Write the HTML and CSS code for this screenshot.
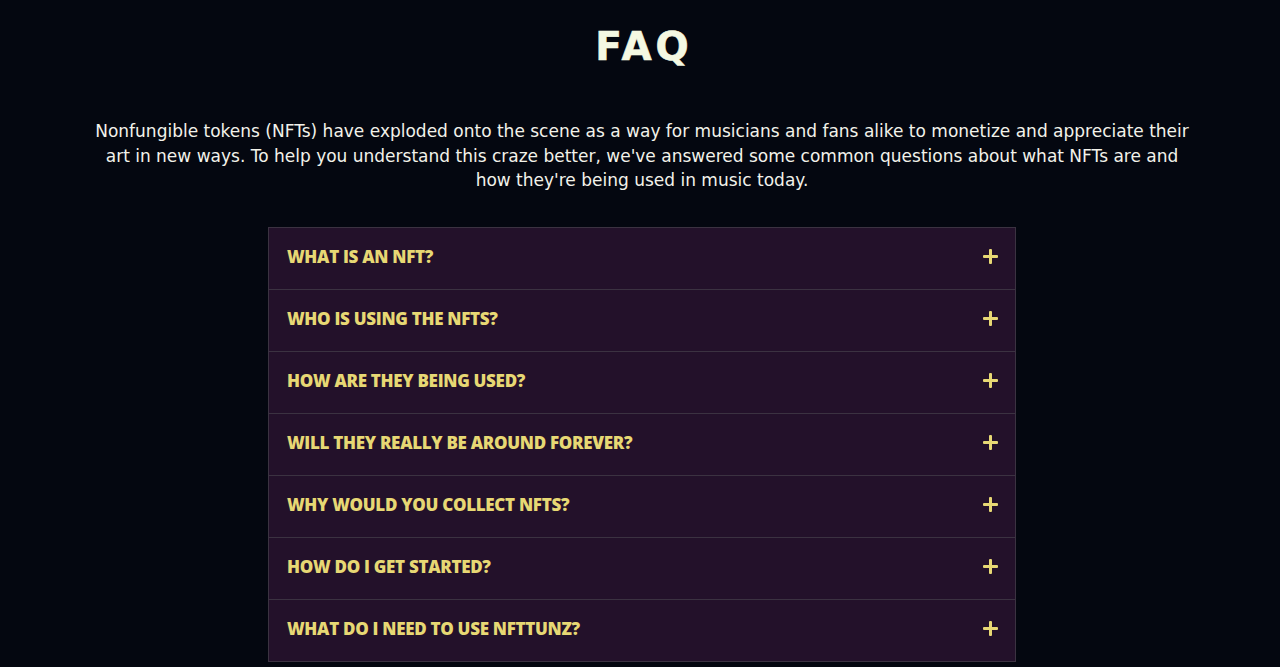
FILE: index.html
```html
<!DOCTYPE html>
<html lang="en">
<head>
<meta charset="utf-8">
<title>FAQ</title>
<link rel="stylesheet" href="styles.css">
</head>
<body>
<section class="faq">
  <h1 class="faq-title">FAQ</h1>
  <p class="faq-intro">Nonfungible tokens (NFTs) have exploded onto the scene as a way for musicians and fans alike to monetize and appreciate their art in new ways. To help you understand this craze better, we've answered some common questions about what NFTs are and how they're being used in music today.</p>
  <div class="faq-list">
    <div class="faq-item"><span class="faq-q">WHAT IS AN NFT?</span><span class="faq-plus"></span></div>
    <div class="faq-item"><span class="faq-q">WHO IS USING THE NFTS?</span><span class="faq-plus"></span></div>
    <div class="faq-item"><span class="faq-q">HOW ARE THEY BEING USED?</span><span class="faq-plus"></span></div>
    <div class="faq-item"><span class="faq-q">WILL THEY REALLY BE AROUND FOREVER?</span><span class="faq-plus"></span></div>
    <div class="faq-item"><span class="faq-q">WHY WOULD YOU COLLECT NFTS?</span><span class="faq-plus"></span></div>
    <div class="faq-item"><span class="faq-q">HOW DO I GET STARTED?</span><span class="faq-plus"></span></div>
    <div class="faq-item"><span class="faq-q">WHAT DO I NEED TO USE NFTTUNZ?</span><span class="faq-plus"></span></div>
  </div>
</section>
</body>
</html>
```
FILE: styles.css
```css
html, body {
  margin: 0;
  padding: 0;
  background: #040710;
  height: 100%;
  overflow: hidden;
}
body {
  font-family: "DejaVu Sans", "Liberation Sans", sans-serif;
  color: #f2f4e6;
}
.faq {
  display: flex;
  flex-direction: column;
  align-items: center;
  padding: 25px 0 0 4px;
}
.faq-title {
  margin: 0;
  font-size: 39px;
  line-height: 44px;
  font-weight: 700;
  letter-spacing: 4px;
  padding-left: 4px;
  -webkit-text-stroke: 0.6px #f4f8e2;
  color: #f4f8e2;
}
.faq-intro {
  margin: 50px 0 0;
  width: 1104px;
  text-align: center;
  font-size: 17px;
  line-height: 24.5px;
  color: #f2f2ea;
}
.faq-list {
  margin-top: 34px;
  width: 748px;
  display: flex;
  flex-direction: column;
  border-top: 1px solid #3b3241;
}
.faq-item {
  height: 62px;
  box-sizing: border-box;
  background: #23112a;
  border: 1px solid #3b3241;
  border-top-width: 0;
  display: flex;
  align-items: center;
  justify-content: space-between;
  padding: 0 17px 4px 18px;
}
.faq-q {
  font-family: "Open Sans", "DejaVu Sans", sans-serif;
  font-size: 17px;
  font-weight: 800;
  letter-spacing: -0.3px;
  color: #e7d874;
}
.faq-plus {
  position: relative;
  width: 15px;
  height: 15px;
}
.faq-plus::before,
.faq-plus::after {
  content: "";
  position: absolute;
  background: #e7d874;
  border-radius: 1px;
}
.faq-plus::before {
  left: 0;
  top: 6px;
  width: 15px;
  height: 3px;
}
.faq-plus::after {
  left: 6px;
  top: 0;
  width: 3px;
  height: 15px;
}
```
